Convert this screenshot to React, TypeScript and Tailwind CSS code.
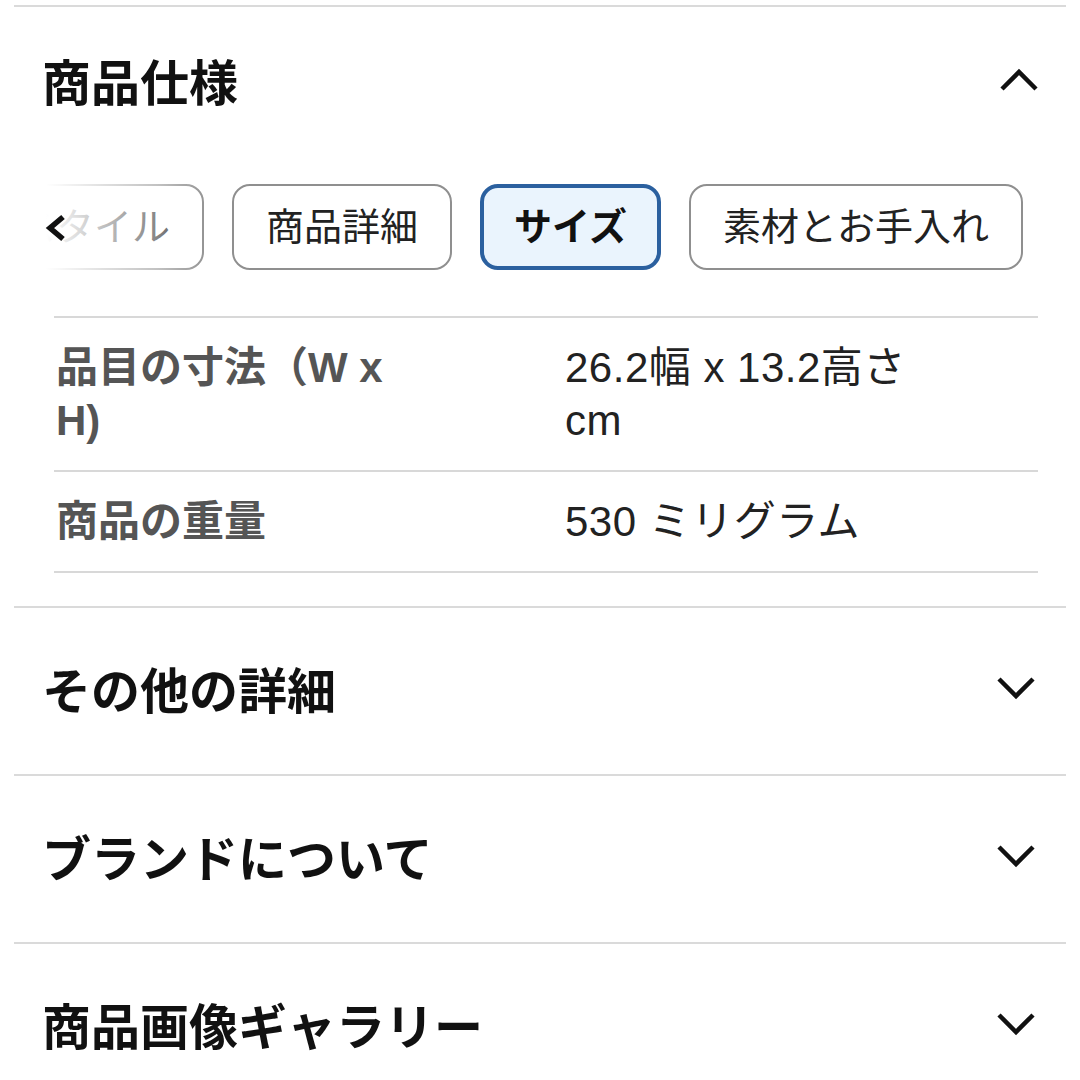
import React from 'react';

// 商品ページ ㆍ 仕様アコーディオン（サイズタブ選択中）

const specRows = [
  { label: '品目の寸法（W x H)', value: '26.2幅 x 13.2高さ cm' },
  { label: '商品の重量', value: '530 ミリグラム' },
];

const tabs = [
  { id: 'style', label: 'スタイル' },
  { id: 'detail', label: '商品詳細' },
  { id: 'size', label: 'サイズ' },
  { id: 'care', label: '素材とお手入れ' },
];

const collapsed = ['その他の詳細', 'ブランドについて', '商品画像ギャラリー'];

function Chevron({ up }: { up?: boolean }) {
  return (
    <svg width="40" height="26" viewBox="0 0 40 26" fill="none" className="shrink-0">
      <polyline
        points={up ? '3,22 20,5 37,22' : '3,4 20,21 37,4'}
        stroke="#111"
        strokeWidth="4.5"
        strokeLinejoin="miter"
      />
    </svg>
  );
}

export default function App() {
  const active = 'size';
  return (
    <div className="w-[1080px] h-[1080px] overflow-hidden bg-white px-[14px] font-['Liberation_Sans','Noto_Sans_CJK_JP',sans-serif]">
      <div className="mt-[5px] border-t-2 border-[#dadada]">
        {/* 見出し */}
        <div className="h-[146px] flex items-center justify-between pl-[28px] pr-[27px]">
          <h2 className="text-[49px] font-bold text-[#111] font-['Noto_Sans_CJK_JP',sans-serif]">商品仕様</h2>
          <Chevron up />
        </div>

        {/* タブ */}
        <div className="relative -mx-[14px] mt-[31px] overflow-hidden">
          <div className="flex gap-[28px] -ml-[16px] w-max">
            {tabs.map((t) => {
              const on = t.id === active;
              return (
                <div
                  key={t.id}
                  className={
                    on
                      ? 'h-[86px] flex items-center px-[30px] rounded-[18px] border-[4px] border-[#2b609f] bg-[#eaf4fd] text-[38px] font-bold text-[#111]'
                      : 'h-[86px] flex items-center px-[32px] rounded-[18px] border-2 border-[#8f8f8f] bg-white text-[38px] text-[#222]'
                  }
                >
                  {t.label}
                </div>
              );
            })}
          </div>
          {/* 左端フェード + 戻る矢印 */}
          <div className="absolute left-0 top-0 h-full w-[210px] bg-[linear-gradient(to_right,#fff_22%,rgba(255,255,255,0.45)_75%,rgba(255,255,255,0)_100%)]" />
          <svg width="22" height="28" viewBox="0 0 22 28" fill="none" className="absolute left-[45px] top-[30px]">
            <polyline points="18,3 5,14 18,25" stroke="#111" strokeWidth="5.5" />
          </svg>
        </div>

        {/* 仕様テーブル */}
        <div className="mt-[46px] ml-[40px] mr-[28px] mb-[33px] border-t-2 border-[#d8d8d8]">
          {specRows.map((r) => (
            <div key={r.label} className="flex py-[23px] border-b-2 border-[#d8d8d8] text-[42px] leading-[53px]">
              <div className="w-[511px] pl-[2px] pr-[130px] font-bold text-[#555]">{r.label}</div>
              <div className="w-[380px] text-[#222] tracking-[0.5px]">{r.value}</div>
            </div>
          ))}
        </div>
      </div>

      {collapsed.map((c) => (
        <div key={c} className="border-t-2 border-[#dadada]">
          <div className="h-[166px] pb-[6px] flex items-center justify-between pl-[28px] pr-[30px]">
            <h2 className="text-[49px] font-bold text-[#111] font-['Noto_Sans_CJK_JP',sans-serif]">{c}</h2>
            <Chevron />
          </div>
        </div>
      ))}
    </div>
  );
}
